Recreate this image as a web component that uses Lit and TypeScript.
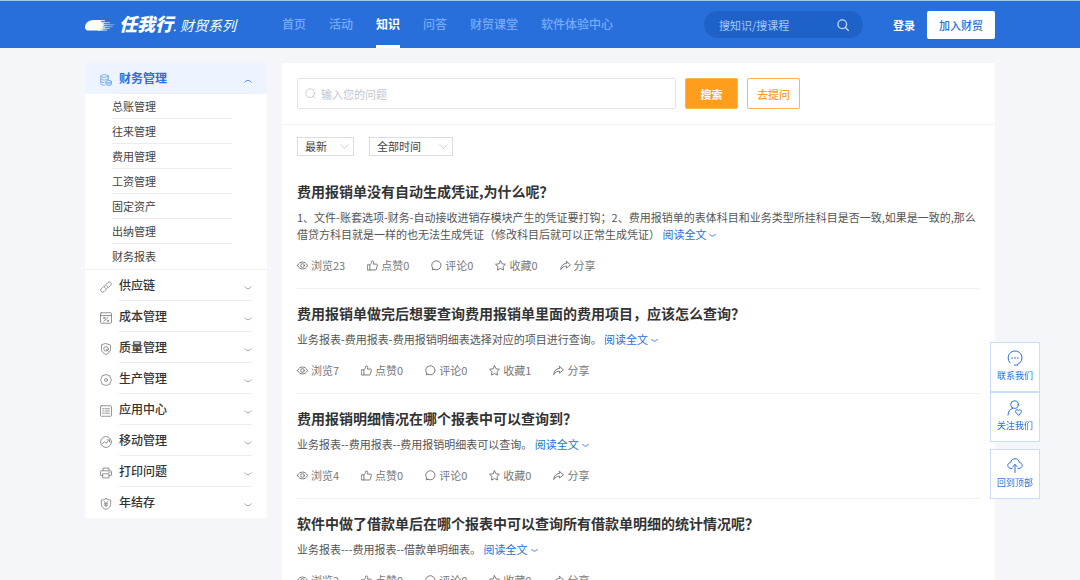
import { LitElement, html, css, svg, nothing } from "lit";
import { customElement, property, state } from "lit/decorators.js";
import { classMap } from "lit/directives/class-map.js";

const glyphs: Record<string, unknown> = {
  coins: svg`<ellipse cx="6" cy="2.800" rx="5" ry="1.800"/><path d="M1 2.800v10.400c0 1 2 1.800 5 1.800M11 2.800v4.700M1 6.200c0 1 2.200 1.800 5 1.800s5-.8 5-1.800M1 9.700c0 1 2 1.700 4.500 1.800"/><ellipse cx="11.700" cy="10" rx="3.600" ry="1.400"/><path d="M8.100 10v3.800c0 .8 1.600 1.400 3.600 1.400s3.600-.6 3.600-1.400V10M8.100 12c0 .8 1.600 1.400 3.600 1.400s3.600-.6 3.600-1.400"/>`,
  link: svg`<path d="M7.200 10c-1.500-1-1.700-2.900-.4-4.200l3.800-3.900a2.600 2.600 0 0 1 3.700 3.700l-3 3"/><path d="M8.800 6c1.500 1 1.700 2.900.4 4.200l-3.800 3.900a2.600 2.600 0 0 1-3.700-3.700l3-3"/>`,
  cost: svg`<rect x=".7" y="1" width="14.600" height="14" rx="1"/><path d="M.7 4.700h14.600M5 12.500l6-5.500"/><circle cx="5.600" cy="8" r="1"/><circle cx="10.500" cy="11.700" r="1"/>`,
  quality: svg`<path d="M8 .8l6 2v5.500c0 3.500-2.700 5.700-6 7-3.300-1.300-6-3.500-6-7V2.800z"/><circle cx="8" cy="7.800" r="3"/><path d="M8.500 8.500l2.500 2.500"/>`,
  gear: svg`<path d="M6 1.500L8 .7l2 .8 1.300.6 2 .2.300 2.100.6 1.500L15.300 8l-1.100 2.100-.6 1.500-.3 2.100-2 .2-1.300.6-2 .8-2-.8-1.300-.6-2-.2-.3-2.100-.6-1.500L.7 8l1.100-2.100.6-1.500.3-2.100 2-.2z"/><circle cx="8" cy="8" r="2"/>`,
  list: svg`<rect x=".7" y="1" width="14.600" height="14" rx="1"/><path d="M3.500 5h1.300M6.500 5h6M3.500 8h1.300M6.500 8h6M3.500 11h1.300M6.500 11h6"/>`,
  trend: svg`<circle cx="8" cy="8" r="7.200"/><path d="M3 10.500l3-3 2 2 4.500-4M9.800 5.200h2.900v2.600"/>`,
  printer: svg`<path d="M4 5V1.500h8V5M4 11.500H1.500c-.5 0-.8-.3-.8-.8V6c0-.6.4-1 1-1h12.600c.6 0 1 .4 1 1v4.700c0 .5-.3.8-.8.8H12"/><path d="M4 9h8v5.500H4zM12 7h1.300"/>`,
  yen: svg`<path d="M8 .8c2 1.300 4 1.800 6.200 1.900v5.600c0 3.500-2.900 5.700-6.200 7-3.300-1.300-6.200-3.500-6.200-7V2.700C4 2.600 6 2.100 8 .8z"/><path d="M5.500 4.500L8 7.500l2.500-3M8 7.500V12M5.700 7.700h4.600M5.700 9.700h4.600"/>`,
  eye: svg`<path d="M.7 8C2.500 4.500 5 3 8 3s5.500 1.500 7.300 5C13.500 11.500 11 13 8 13S2.500 11.500.7 8z"/><circle cx="8" cy="8" r="2.700"/>`,
  thumb: svg`<path d="M1 7h3.200v7.500H1zM4.200 7.200C6 6 6.800 4 7 1.500c2-.6 3 .7 2.800 2.200L9.400 6H14c.9 0 1.300.7 1.100 1.500l-1.400 5.800c-.2.800-.7 1.200-1.500 1.200h-8"/>`,
  comment: svg`<path d="M4 13.500l-2 .8.300-2.700a6.700 6.700 0 1 1 2.200 2z"/>`,
  star: svg`<path d="M8 1l2.200 4.500 5 .7-3.600 3.500.8 5L8 12.400l-4.400 2.300.8-5L.8 6.200l5-.7z"/>`,
  share: svg`<path d="M9.500 2l5.700 5-5.700 4.800V9C5.500 9 3 10.500 1 14c.3-5.500 3.500-8.800 8.500-9.200z"/>`,
  search: svg`<circle cx="7" cy="7" r="5.800"/><path d="M11.200 11.200l4 4"/>`,
  lens: svg`<circle cx="7.500" cy="7.500" r="6.300"/><path d="M11 12l3 1.800"/>`,
  down: svg`<path d="M1.500 5.500c4 5.300 9 5.300 13 0"/>`,
  up: svg`<path d="M1.500 10.500c4-5.300 9-5.300 13 0"/>`,
  vee: svg`<path d="M1.500 4.500L8 11.500l6.500-7"/>`,
  service: svg`<path d="M3 12.800A7 7 0 1 1 10.500 14.500"/><path d="M7.500 15.100h3"/><path d="M4.700 8h1M7.500 8h1M10.300 8h1"/>`,
  follow: svg`<circle cx="7.500" cy="4.600" r="3.800"/><path d="M1 15c.2-3.600 2-5.700 4.700-6.800M11.500 15.200L8.800 12.300c-1.200-1.800 1.200-3.500 2.700-1.700 1.500-1.800 3.900-.1 2.700 1.700z"/>`,
  cloud: svg`<path d="M5 11.500H4C-.2 11-.2 6 3.600 5.600 4.500.4 11.500.4 12.400 5.600 16.200 6 16.200 11 12 11.500h-1M8 15.500V7.500M5.700 9.800L8 7.500l2.300 2.300"/>`,
};

@customElement("line-icon")
export class LineIcon extends LitElement {
  @property() name = "";

  static styles = css`
    :host {
      display: inline-block;
      flex: none;
      width: 12px;
      height: 12px;
    }
    .glyph {
      display: block;
      width: 100%;
      height: 100%;
      fill: none;
      stroke: currentColor;
      stroke-width: var(--stroke, 1.2);
      stroke-linecap: round;
      stroke-linejoin: round;
    }
  `;

  render() {
    return html`<svg class="glyph" viewBox="0 0 16 16" aria-hidden="true">${glyphs[this.name]}</svg>`;
  }
}

@customElement("site-header")
export class SiteHeader extends LitElement {
  private links = ["首页", "活动", "知识", "问答", "财贸课堂", "软件体验中心"];

  static styles = css`
    :host {
      display: block;
      background: #286fdc;
      border-top: 1px solid #a9c6ee;
      color: #fff;
    }
    .inner {
      display: flex;
      align-items: center;
      box-sizing: border-box;
      max-width: 910px;
      height: 47px;
      margin: 0 auto;
    }
    .brand {
      display: flex;
      align-items: center;
      flex: none;
      width: 197px;
      color: #fff;
      text-decoration: none;
      font-style: italic;
      white-space: nowrap;
    }
    .comet {
      width: 30px;
      height: 12px;
      margin-right: 4px;
    }
    .name {
      font-size: 18px;
      font-weight: 900;
      line-height: 24px;
    }
    .dot {
      font-size: 11px;
      font-weight: 400;
    }
    .series {
      margin-left: 4px;
      font-size: 14px;
      line-height: 24px;
    }
    .nav {
      display: flex;
      gap: 23px;
      flex: 1;
      align-self: stretch;
    }
    .tab {
      box-sizing: border-box;
      border-bottom: 3px solid transparent;
      color: #78abfb;
      font-size: 12px;
      font-weight: 500;
      line-height: 46px;
      text-decoration: none;
      white-space: nowrap;
    }
    .tab.on {
      border-color: #fff;
      color: #fff;
      font-weight: 700;
    }
    .find {
      display: flex;
      align-items: center;
      box-sizing: border-box;
      width: 159px;
      height: 27px;
      padding: 0 14px 0 15px;
      border-radius: 14px;
      background: #1e61c8;
      color: #c4dafc;
    }
    .query {
      flex: 1;
      min-width: 0;
      padding: 0;
      border: 0;
      outline: 0;
      background: none;
      color: inherit;
      font: 11px/20px "Noto Sans CJK SC", sans-serif;
    }
    .query::placeholder {
      color: #a9c8f8;
      opacity: 1;
    }
    .go {
      display: flex;
      padding: 0;
      border: 0;
      background: none;
      color: inherit;
    }
    .go line-icon {
      --stroke: 1.8;
    }
    .login {
      margin: 0 12px 0 30px;
      color: #fff;
      font-size: 11px;
      font-weight: 700;
      text-decoration: none;
    }
    .join {
      width: 68px;
      height: 28px;
      padding: 0;
      border: 0;
      border-radius: 2px;
      background: #fff;
      color: #286fdc;
      font: 500 11px/26px "Noto Sans CJK SC", sans-serif;
    }
  `;

  render() {
    return html`
      <header class="inner">
        <a class="brand" href="#">
          <svg class="comet" viewBox="0 0 30 12" aria-hidden="true">
            <defs>
              <linearGradient id="tail">
                <stop offset="0" stop-color="#fff" />
                <stop offset="1" stop-color="#fff" stop-opacity=".15" />
              </linearGradient>
            </defs>
            <path fill="#fff" d="M0 8.200C0 4 4 1 8.500 1H15l3 5-3 5.600H3C1 11.600 0 10 0 8.200z" />
            <path fill="url(#tail)" d="M13 1h7v1.200h-4v.8h9v1.200h-6v.8h11v1.200H19v.8h9v1.200h-8v.8h5v1.200h-7v.6h4v1H13z" />
          </svg>
          <span class="name">任我行<span class="dot">.</span></span>
          <span class="series">财贸系列</span>
        </a>
        <nav class="nav">
          ${this.links.map((t) => html`<a href="#" class=${classMap({ tab: true, on: t === "知识" })}>${t}</a>`)}
        </nav>
        <form class="find" @submit=${(e: Event) => e.preventDefault()}>
          <input class="query" type="text" aria-label="搜知识/搜课程" placeholder="搜知识/搜课程" />
          <button class="go" aria-label="搜索"><line-icon name="search"></line-icon></button>
        </form>
        <a class="login" href="#">登录</a>
        <button class="join">加入财贸</button>
      </header>
    `;
  }
}

interface Group {
  icon: string;
  title: string;
  children?: string[];
}

@customElement("side-menu")
export class SideMenu extends LitElement {
  @state() private open = "财务管理";

  private groups: Group[] = [
    {
      icon: "coins",
      title: "财务管理",
      children: ["总账管理", "往来管理", "费用管理", "工资管理", "固定资产", "出纳管理", "财务报表"],
    },
    { icon: "link", title: "供应链" },
    { icon: "cost", title: "成本管理" },
    { icon: "quality", title: "质量管理" },
    { icon: "gear", title: "生产管理" },
    { icon: "list", title: "应用中心" },
    { icon: "trend", title: "移动管理" },
    { icon: "printer", title: "打印问题" },
    { icon: "yen", title: "年结存" },
  ];

  static styles = css`
    :host {
      display: block;
      background: #fff;
    }
    .head {
      display: flex;
      align-items: stretch;
      gap: 7px;
      width: 100%;
      height: 31px;
      padding: 0 15px;
      border: 0;
      background: none;
      color: #333;
      font: 500 12px/30px "Noto Sans CJK SC", sans-serif;
      text-align: left;
    }
    .mark {
      align-self: center;
      margin-top: 2px;
      color: #888;
    }
    .label {
      display: flex;
      flex: 1;
      align-items: center;
      justify-content: space-between;
      border-bottom: 1px solid #ededf0;
    }
    .group:last-child .label {
      border-color: transparent;
    }
    .chevron {
      width: 8px;
      height: 8px;
      margin-top: 5px;
      color: #a3a3a3;
      --stroke: 2;
    }
    .head.on {
      background: #edf4ff;
      color: #286fdc;
      font-weight: 700;
    }
    .head.on .mark {
      color: #75a6f0;
    }
    .head.on .chevron {
      color: #4c87e4;
    }
    .subs {
      margin: 0;
      padding: 0 35px 1px 27px;
      border-bottom: 1px solid #f0f1f4;
      list-style: none;
    }
    .sub {
      border-bottom: 1px solid #ededf0;
    }
    .sub:last-child {
      border: 0;
    }
    .to {
      display: block;
      color: #444;
      font-size: 11px;
      line-height: 24px;
      text-decoration: none;
    }
  `;

  render() {
    return html`${this.groups.map((g) => {
      const on = g.title === this.open;
      return html`
        <section class="group">
          <button
            class=${classMap({ head: true, on })}
            aria-expanded=${on ? "true" : "false"}
            @click=${() => (this.open = on ? "" : g.title)}
          >
            <line-icon class="mark" name=${g.icon}></line-icon>
            <span class="label">${g.title}<line-icon class="chevron" name=${on ? "up" : "down"}></line-icon></span>
          </button>
          ${on && g.children
            ? html`<ul class="subs">
                ${g.children.map((c) => html`<li class="sub"><a class="to" href="#">${c}</a></li>`)}
              </ul>`
            : nothing}
        </section>
      `;
    })}`;
  }
}

interface Question {
  title: string;
  text: string;
  views: number;
  likes: number;
  comments: number;
  saves: number;
}

@customElement("question-item")
export class QuestionItem extends LitElement {
  @property({ attribute: false }) item!: Question;

  static styles = css`
    :host {
      display: block;
      padding: 14px 0 14px;
      border-bottom: 1px solid #f1f1f4;
    }
    .title {
      margin: 0 0 8px;
      color: #333;
      font-size: 14px;
      font-weight: 700;
      line-height: 20px;
    }
    .text {
      margin: 0 0 13px;
      color: #555;
      font-size: 11px;
      line-height: 17px;
    }
    .more {
      color: #286fdc;
      text-decoration: none;
      white-space: nowrap;
    }
    .more line-icon {
      width: 7px;
      height: 7px;
      margin-left: 3px;
      --stroke: 2;
    }
    .stats {
      display: flex;
      gap: 22px;
    }
    .stat {
      display: flex;
      align-items: center;
      gap: 3px;
      padding: 0;
      border: 0;
      background: none;
      color: #777;
      font: 11px/18px "Noto Sans CJK SC", sans-serif;
    }
    .stat line-icon {
      width: 11px;
      height: 11px;
      --stroke: 1.4;
    }
  `;

  render() {
    const q = this.item;
    const stats = [
      ["eye", `浏览${q.views}`],
      ["thumb", `点赞${q.likes}`],
      ["comment", `评论${q.comments}`],
      ["star", `收藏${q.saves}`],
      ["share", "分享"],
    ];
    return html`
      <h2 class="title">${q.title}</h2>
      <p class="text">${q.text} <a class="more" href="#">阅读全文<line-icon name="down"></line-icon></a></p>
      <div class="stats">
        ${stats.map(([icon, label]) => html`<button class="stat"><line-icon name=${icon}></line-icon>${label}</button>`)}
      </div>
    `;
  }
}

@customElement("app-root")
export class AppRoot extends LitElement {
  private questions: Question[] = [
    {
      title: "费用报销单没有自动生成凭证,为什么呢？",
      text: "1、文件-账套选项-财务-自动接收进销存模块产生的凭证要打钩；2、费用报销单的表体科目和业务类型所挂科目是否一致,如果是一致的,那么借贷方科目就是一样的也无法生成凭证（修改科目后就可以正常生成凭证）",
      views: 23,
      likes: 0,
      comments: 0,
      saves: 0,
    },
    {
      title: "费用报销单做完后想要查询费用报销单里面的费用项目，应该怎么查询？",
      text: "业务报表-费用报表-费用报销明细表选择对应的项目进行查询。",
      views: 7,
      likes: 0,
      comments: 0,
      saves: 1,
    },
    {
      title: "费用报销明细情况在哪个报表中可以查询到？",
      text: "业务报表--费用报表--费用报销明细表可以查询。",
      views: 4,
      likes: 0,
      comments: 0,
      saves: 0,
    },
    {
      title: "软件中做了借款单后在哪个报表中可以查询所有借款单明细的统计情况呢？",
      text: "业务报表---费用报表--借款单明细表。",
      views: 2,
      likes: 0,
      comments: 0,
      saves: 0,
    },
  ];

  static styles = css`
    :host {
      display: block;
      min-height: 100vh;
      background: #f5f6fa;
      font-family: "Noto Sans CJK SC", sans-serif;
    }
    .page {
      display: grid;
      grid-template-columns: 182px minmax(0, 1fr);
      align-items: start;
      gap: 15px;
      max-width: 910px;
      margin: 0 auto;
      padding-top: 15px;
    }
    .panel {
      background: #fff;
    }
    .ask {
      display: flex;
      gap: 9px;
      padding: 15px;
      border-bottom: 1px solid #f3f3f6;
    }
    .box {
      display: flex;
      align-items: center;
      gap: 5px;
      box-sizing: border-box;
      width: 379px;
      height: 31px;
      padding: 0 7px;
      border: 1px solid #e2e4ec;
      border-radius: 2px;
      color: #c3c6cf;
    }
    .box line-icon {
      width: 11px;
      height: 11px;
    }
    .field {
      flex: 1;
      min-width: 0;
      padding: 0;
      border: 0;
      outline: 0;
      background: none;
      color: #444;
      font: 11px/20px "Noto Sans CJK SC", sans-serif;
    }
    .field::placeholder {
      color: #c3c6cf;
      opacity: 1;
    }
    .act {
      width: 53px;
      height: 31px;
      padding: 0;
      border: 1px solid #ffb450;
      border-radius: 2px;
      background: #fff;
      color: #ff9d1c;
      font: 500 11px/20px "Noto Sans CJK SC", sans-serif;
    }
    .act.solid {
      background: #ff9d1c;
      color: #fff;
      font-weight: 700;
    }
    .filters {
      display: flex;
      gap: 15px;
      padding: 12px 15px 11px;
    }
    .pick {
      position: relative;
      display: flex;
      color: #b9bcc5;
    }
    .pick line-icon {
      position: absolute;
      top: 5px;
      right: 5px;
      width: 9px;
      height: 9px;
      pointer-events: none;
    }
    .select {
      appearance: none;
      box-sizing: border-box;
      height: 19px;
      padding: 0 26px 0 7px;
      border: 1px solid #dcdde2;
      border-radius: 0;
      background: #fff;
      color: #444;
      font: 11px/17px "Noto Sans CJK SC", sans-serif;
    }
    .select.wide {
      padding-right: 31px;
    }
    .list {
      padding: 0 15px;
    }
    .dock {
      position: fixed;
      right: 40px;
      bottom: 81px;
      display: flex;
      flex-direction: column;
    }
    .tool {
      display: flex;
      flex-direction: column;
      align-items: center;
      justify-content: center;
      gap: 2px;
      width: 50px;
      height: 50px;
      padding: 0;
      border: 1px solid #c9dcf8;
      background: #fff;
      color: #286fdc;
      font: 9px/16px "Noto Sans CJK SC", sans-serif;
    }
    .tool line-icon {
      width: 16px;
      height: 16px;
      --stroke: 1;
    }
    .tool:last-child {
      margin-top: 7px;
    }
  `;

  render() {
    return html`
      <site-header></site-header>
      <div class="page">
        <side-menu></side-menu>
        <main class="panel">
          <form class="ask" @submit=${(e: Event) => e.preventDefault()}>
            <label class="box">
              <line-icon name="lens"></line-icon>
              <input class="field" type="text" aria-label="输入您的问题" placeholder="输入您的问题" />
            </label>
            <button class="act solid">搜索</button>
            <button class="act" type="button">去提问</button>
          </form>
          <div class="filters">
            <label class="pick">
              <select class="select" aria-label="排序"><option>最新</option></select>
              <line-icon name="vee"></line-icon>
            </label>
            <label class="pick">
              <select class="select wide" aria-label="时间"><option>全部时间</option></select>
              <line-icon name="vee"></line-icon>
            </label>
          </div>
          <div class="list">
            ${this.questions.map((q) => html`<question-item .item=${q}></question-item>`)}
          </div>
        </main>
      </div>
      <aside class="dock">
        <button class="tool"><line-icon name="service"></line-icon>联系我们</button>
        <button class="tool"><line-icon name="follow"></line-icon>关注我们</button>
        <button class="tool"><line-icon name="cloud"></line-icon>回到顶部</button>
      </aside>
    `;
  }
}
